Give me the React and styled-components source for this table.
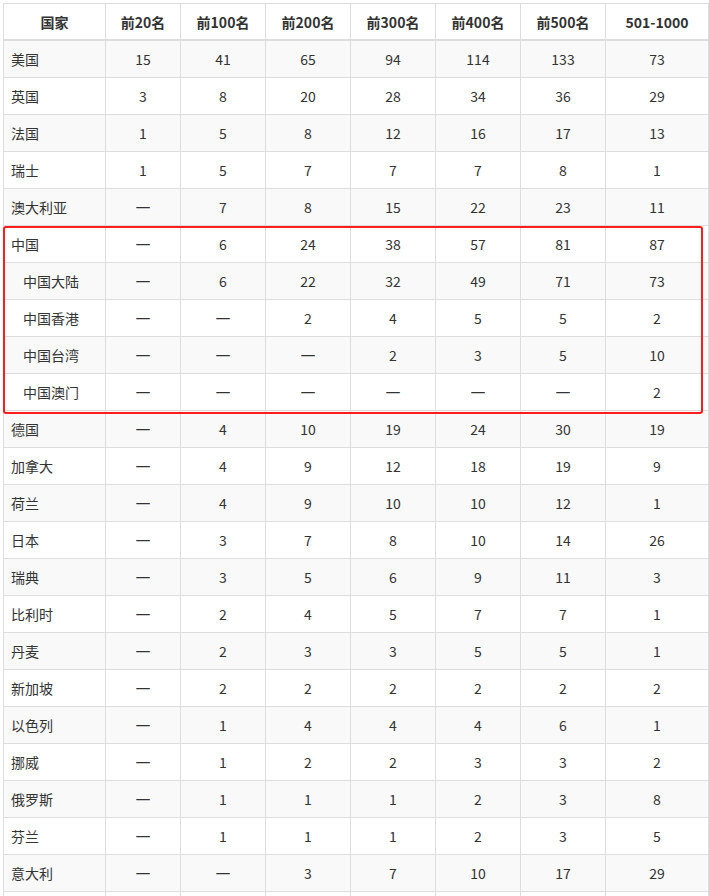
import React from "react";
import styled, { createGlobalStyle } from "styled-components";

const Global = createGlobalStyle`
  html, body { margin: 0; padding: 0; background: #fff; }
  body { padding: 3px 0 0 3px; overflow: hidden; font-family: "Noto Sans CJK SC", "Noto Sans", sans-serif; }
`;

const Wrap = styled.div`
  position: relative;
  width: 705px;
`;

const Table = styled.table`
  border-collapse: collapse;
  table-layout: fixed;
  width: 705px;
  font-size: 14px;
  color: #333;
`;

const Th = styled.th`
  border: 1px solid #ddd;
  border-bottom: 2px solid #ddd;
  padding: 8px 4px 7px;
  line-height: 20px;
  height: 20px;
  font-weight: bold;
  text-align: center;
  background: #fff;
`;

const Tr = styled.tr`
  background: ${(p) => (p.$odd ? "#f9f9f9" : "#fff")};
`;

const Td = styled.td`
  border: 1px solid #ddd;
  padding: 8px 4px;
  line-height: 20px;
  height: 20px;
  text-align: center;
  white-space: nowrap;
`;

const NameTd = styled(Td)`
  text-align: left;
  padding-left: ${(p) => (p.$indent ? "19px" : "7px")};
`;

const Dash = styled.span`
  display: inline-block;
  height: 20px;
  line-height: 20px;
  vertical-align: top;
  overflow: hidden;
  font-family: "DejaVu Sans", sans-serif;
  font-size: 15px;
  color: #333;
`;

const Highlight = styled.div`
  position: absolute;
  left: 0;
  width: 696px;
  border: 2px solid #ff1c1c;
  border-radius: 3px;
  pointer-events: none;
`;

const widths = [102, 75, 85, 85, 85, 85, 85, 103];
const heads = ["国家", "前20名", "前100名", "前200名", "前300名", "前400名", "前500名", "501-1000"];
const D = "—";
const rows = [
  ["美国", 15, 41, 65, 94, 114, 133, 73],
  ["英国", 3, 8, 20, 28, 34, 36, 29],
  ["法国", 1, 5, 8, 12, 16, 17, 13],
  ["瑞士", 1, 5, 7, 7, 7, 8, 1],
  ["澳大利亚", D, 7, 8, 15, 22, 23, 11],
  ["中国", D, 6, 24, 38, 57, 81, 87],
  ["中国大陆", D, 6, 22, 32, 49, 71, 73, true],
  ["中国香港", D, D, 2, 4, 5, 5, 2, true],
  ["中国台湾", D, D, D, 2, 3, 5, 10, true],
  ["中国澳门", D, D, D, D, D, D, 2, true],
  ["德国", D, 4, 10, 19, 24, 30, 19],
  ["加拿大", D, 4, 9, 12, 18, 19, 9],
  ["荷兰", D, 4, 9, 10, 10, 12, 1],
  ["日本", D, 3, 7, 8, 10, 14, 26],
  ["瑞典", D, 3, 5, 6, 9, 11, 3],
  ["比利时", D, 2, 4, 5, 7, 7, 1],
  ["丹麦", D, 2, 3, 3, 5, 5, 1],
  ["新加坡", D, 2, 2, 2, 2, 2, 2],
  ["以色列", D, 1, 4, 4, 4, 6, 1],
  ["挪威", D, 1, 2, 2, 3, 3, 2],
  ["俄罗斯", D, 1, 1, 1, 2, 3, 8],
  ["芬兰", D, 1, 1, 1, 2, 3, 5],
  ["意大利", D, D, 3, 7, 10, 17, 29],
  ["", "", "", "", "", "", "", ""],
];

export default function App() {
  return (
    <>
      <Global />
      <Wrap>
        <Table>
          <colgroup>
            {widths.map((w, i) => (
              <col key={i} style={{ width: w }} />
            ))}
          </colgroup>
          <thead>
            <tr>
              {heads.map((h) => (
                <Th key={h}>{h}</Th>
              ))}
            </tr>
          </thead>
          <tbody>
            {rows.map((r, i) => (
              <Tr key={i} $odd={i % 2 === 0}>
                <NameTd $indent={r[8]}>{r[0]}</NameTd>
                {r.slice(1, 8).map((v, j) => (
                  <Td key={j}>{v === D ? <Dash>{D}</Dash> : v}</Td>
                ))}
              </Tr>
            ))}
          </tbody>
        </Table>
        <Highlight style={{ top: 223, height: 184 }} />
      </Wrap>
    </>
  );
}
